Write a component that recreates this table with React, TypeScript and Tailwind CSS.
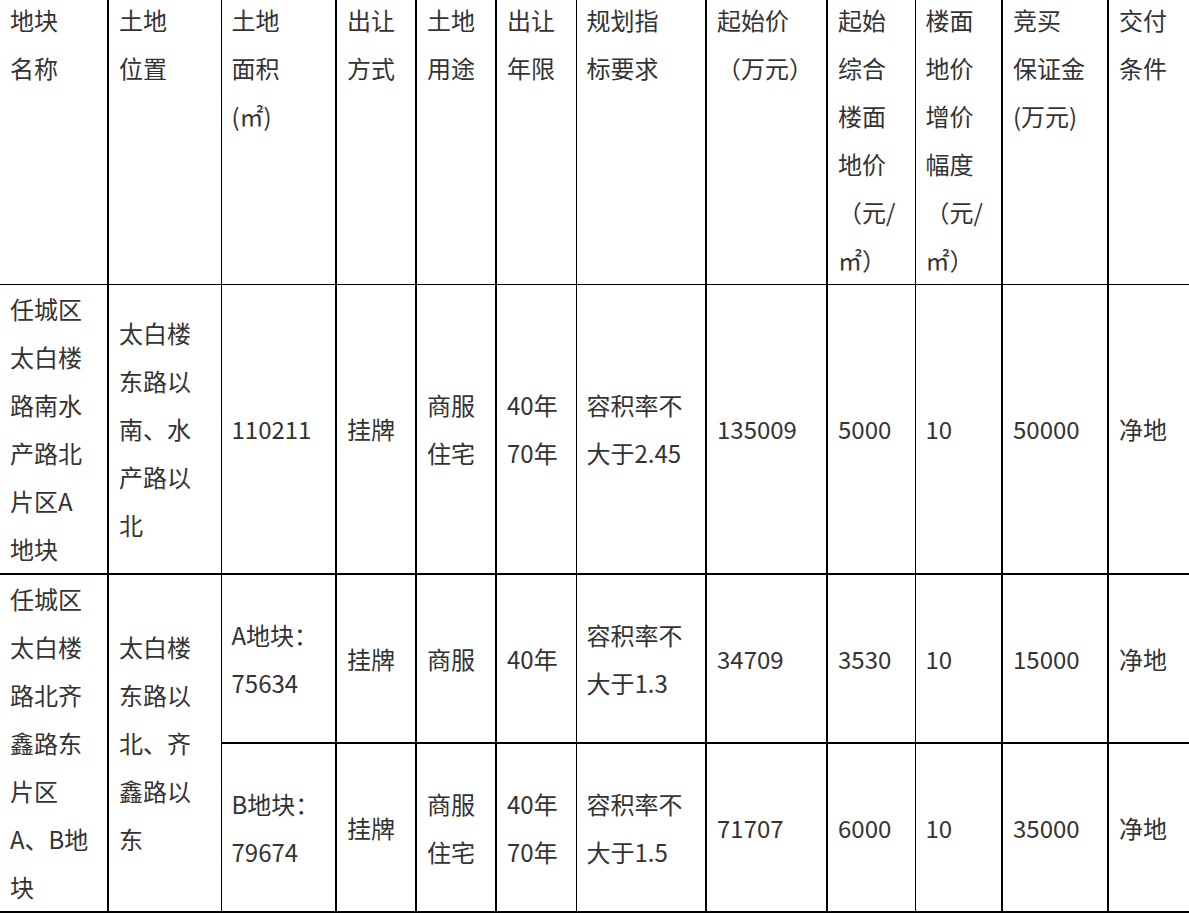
import React from "react";

const widths = [
  "w-[108px]",
  "w-[113px]",
  "w-[115px]",
  "w-[80px]",
  "w-[80px]",
  "w-[80px]",
  "w-[130px]",
  "w-[121px]",
  "w-[88px]",
  "w-[87px]",
  "w-[106px]",
  "w-[100px]",
];

// right border per column (the scan shows a mix of 1px and 2px rules)
const rightBorder = [
  "border-r-2",
  "border-r",
  "border-r-2",
  "border-r-2",
  "border-r-2",
  "border-r",
  "border-r-2",
  "border-r-2",
  "border-r",
  "border-r-2",
  "border-r-2",
  "",
];

const Lines = ({text}: {text: string}) => {
  const parts = text.split("|");
  return (
    <>
      {parts.map((p, i) => (
        <React.Fragment key={i}>
          {p}
          {i < parts.length - 1 && <br />}
        </React.Fragment>
      ))}
    </>
  );
};

interface CellProps {
  col: number;
  text: string;
  bottom: string;
  top?: boolean;
  rowSpan?: number;
}

const Cell = ({col, text, bottom, top, rowSpan}: CellProps) => (
  <td
    rowSpan={rowSpan}
    className={`${rightBorder[col]} ${bottom} border-black px-[10px] py-0 whitespace-nowrap ${
      top ? "align-top" : "align-middle"
    }`}
  >
    <Lines text={text} />
  </td>
);

const header = [
  "地块|名称",
  "土地|位置",
  "土地|面积|(㎡)",
  "出让|方式",
  "土地|用途",
  "出让|年限",
  "规划指|标要求",
  "起始价|（万元）",
  "起始|综合|楼面|地价|（元/|㎡）",
  "楼面|地价|增价|幅度|（元/|㎡）",
  "竞买|保证金|(万元)",
  "交付|条件",
];

const row1 = [
  "任城区|太白楼|路南水|产路北|片区A|地块",
  "太白楼|东路以|南、水|产路以|北",
  "110211",
  "挂牌",
  "商服|住宅",
  "40年|70年",
  "容积率不|大于2.45",
  "135009",
  "5000",
  "10",
  "50000",
  "净地",
];

const row2 = [
  "A地块：|75634",
  "挂牌",
  "商服",
  "40年",
  "容积率不|大于1.3",
  "34709",
  "3530",
  "10",
  "15000",
  "净地",
];

const row3 = [
  "B地块：|79674",
  "挂牌",
  "商服|住宅",
  "40年|70年",
  "容积率不|大于1.5",
  "71707",
  "6000",
  "10",
  "35000",
  "净地",
];

export default function App() {
  return (
    <div className="w-[1189px] h-[913px] overflow-hidden bg-white">
      <table className="-mt-[4px] table-fixed border-collapse w-[1208px] text-[24px] leading-[48px] text-[#333333] font-['Noto_Sans_CJK_SC',sans-serif]">
        <colgroup>
          {widths.map((w, i) => (
            <col key={i} className={w} />
          ))}
        </colgroup>
        <tbody>
          <tr>
            {header.map((t, i) => (
              <Cell key={i} col={i} text={t} bottom="border-b" top />
            ))}
          </tr>
          <tr>
            {row1.map((t, i) => (
              <Cell key={i} col={i} text={t} bottom="border-b-2" />
            ))}
          </tr>
          <tr>
            <Cell col={0} rowSpan={2} text="任城区|太白楼|路北齐|鑫路东|片区|A、B地|块" bottom="border-b-2" />
            <Cell col={1} rowSpan={2} text="太白楼|东路以|北、齐|鑫路以|东" bottom="border-b-2" />
            {row2.map((t, i) => (
              <Cell key={i} col={i + 2} text={t} bottom="border-b-2" />
            ))}
          </tr>
          <tr>
            {row3.map((t, i) => (
              <Cell key={i} col={i + 2} text={t} bottom="border-b-2" />
            ))}
          </tr>
        </tbody>
      </table>
    </div>
  );
}
